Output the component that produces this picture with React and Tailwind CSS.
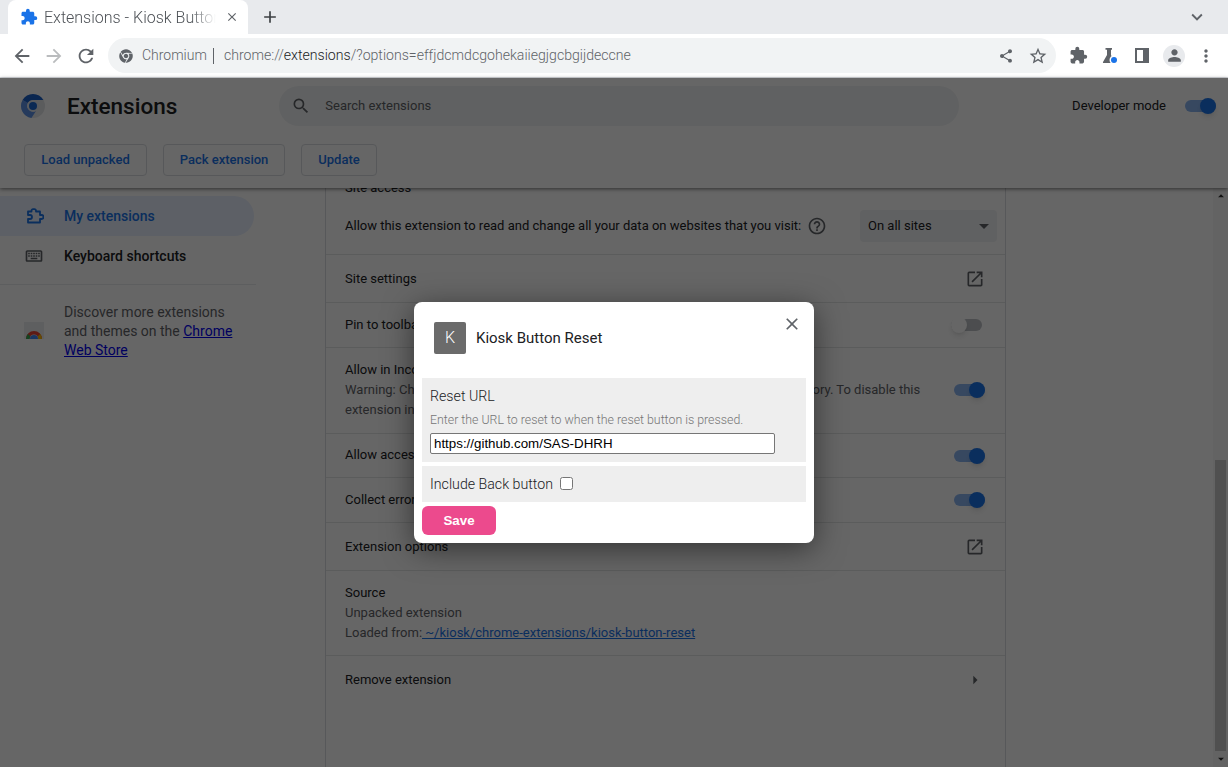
import {
  MdExtension, MdClose, MdAdd, MdExpandMore, MdArrowBack, MdArrowForward, MdRefresh, MdShare,
  MdStarBorder, MdPerson, MdMoreVert, MdSearch, MdOutlineKeyboard,
  MdHelpOutline, MdArrowDropDown, MdOpenInNew, MdArrowRight, MdArrowDropUp,
} from 'react-icons/md';
import { FaChrome } from 'react-icons/fa';

const ROBOTO = 'font-[Roboto,sans-serif]';

const HEADER_BUTTONS = [
  { label: 'Load unpacked', width: 'w-[123px]' },
  { label: 'Pack extension', width: 'w-[122px]' },
  { label: 'Update', width: 'w-[76px]' },
];

function Toggle({ on = true }) {
  return (
    <div className={`relative h-[12px] w-[31px] shrink-0 rounded-full ${on ? 'bg-[#8ab4f0]' : 'mr-[3px] bg-[#bdc1c6]'}`}>
      <div className={`absolute top-[-2px] h-[16px] w-[16px] rounded-full shadow-md ${on ? 'right-0 bg-[#1a73e8]' : 'left-0 bg-white'}`} />
    </div>
  );
}

function Row({ h, pr = 'pr-[20px]', className = '', children }) {
  return (
    <div className={`flex items-center justify-between border-b border-[#e4e5e7] pl-[19px] ${pr} ${h} ${className}`}>
      {children}
    </div>
  );
}

function ChromeBar() {
  return (
    <div className="shrink-0">
      {/* Tab strip */}
      <div className="flex h-[34px] items-end bg-[#e8eaed] pl-[8px]">
        <div className="flex h-[34px] w-[240px] items-center rounded-t-lg bg-white pl-[12px]">
          <MdExtension className="h-[18px] w-[18px] shrink-0 text-[#1a73e8]" />
          <span className="ml-[6px] mt-[2px] w-[172px] overflow-hidden whitespace-nowrap text-[16px] font-light text-[#4d5156] [mask-image:linear-gradient(to_right,black_85%,transparent)]">Extensions - Kiosk Button Reset</span>
          <MdClose className="ml-[9px] h-[14px] w-[14px] shrink-0 text-[#5f6368]" />
        </div>
        <MdAdd className="mb-[7px] ml-[12px] h-[20px] w-[20px] text-[#3c4043]" />
        <MdExpandMore className="mb-[6px] ml-auto mr-[20px] h-[22px] w-[22px] text-[#5f6368]" />
      </div>
      {/* Toolbar */}
      <div className="flex h-[44px] items-center border-b border-[#dadce0] bg-white">
        <MdArrowBack className="ml-[11px] h-[22px] w-[22px] text-[#5f6368]" />
        <MdArrowForward className="ml-[10px] h-[22px] w-[22px] text-[#babcbe]" />
        <MdRefresh className="ml-[10px] h-[22px] w-[22px] text-[#5f6368]" />
        <div className="ml-[11px] flex h-[35px] w-[948px] items-center rounded-full bg-[#f1f3f4] pl-[11px] pr-[8px] text-[14px] font-light">
          <FaChrome className="h-[14px] w-[14px] text-[#5f6368]" />
          <span className="ml-[9px] text-[#5f6368]">Chromium</span>
          <span className="ml-[6px] h-[16px] w-px bg-[#5f6368]" />
          <span className="ml-[10px] text-[14.1px] text-[#5f6368]">chrome://<span className="text-[#202124]">extensions</span>/?options=effjdcmdcgohekaiiegjgcbgijdeccne</span>
          <MdShare className="ml-auto h-[16px] w-[16px] text-[#5f6368]" />
          <MdStarBorder className="ml-[14px] h-[20px] w-[20px] text-[#5f6368]" />
        </div>
        <MdExtension className="ml-[13px] h-[19px] w-[19px] text-[#5f6368]" />
        <div className="relative ml-[12px] h-[20px] w-[20px]">
          <svg className="h-[20px] w-[20px]" viewBox="0 0 20 20">
            <path fill="#5f6368" d="M5.500 2H12V3.800H11V9L14 15.500V17H3.500C3 17 2.800 16.500 3 16L7 9V3.800H5.500Z" />
          </svg>
          <span className="absolute bottom-[3px] right-[3px] h-[6px] w-[6px] rounded-full bg-[#1a73e8] ring-[1.5px] ring-white" />
        </div>
        <svg className="ml-[15px] h-[15px] w-[14px]" viewBox="0 0 14 15">
          <path fill="#5f6368" d="M0 0h14v15H0zM2 2v11h6V2z" fillRule="evenodd" />
        </svg>
        <div className="ml-[14px] flex h-[22px] w-[22px] items-center justify-center rounded-full bg-[#e8eaed]">
          <MdPerson className="h-[19px] w-[19px] text-[#5f6368]" />
        </div>
        <MdMoreVert className="ml-[11px] h-[20px] w-[20px] text-[#5f6368]" />
      </div>
    </div>
  );
}

function PageHeader() {
  return (
    <div className="relative z-10 h-[110px] shrink-0 bg-white shadow-[0_1px_4px_rgba(0,0,0,0.55)]">
      <div className="flex h-[56px] items-center pl-[21px]">
        <svg className="h-[24px] w-[24px]" viewBox="0 0 24 24">
          <circle cx="12" cy="12" r="12" fill="#e3e5e9" />
          <path fill="#5c92e6" d="M1.610 6A12 12 0 0 0 10.400 23.900L15 17A6 6 0 0 1 6.800 9Z" />
          <path fill="#1a5fc8" d="M1.610 6A12 12 0 0 1 22.390 6H12A6 6 0 0 0 6.800 9Z" />
          <circle cx="12" cy="12" r="5.800" fill="#dfe3ea" />
          <circle cx="12" cy="12" r="4" fill="#1a67d2" />
        </svg>
        <h1 className="ml-[22px] mt-[2px] text-[22.5px] font-medium text-[#202124]">Extensions</h1>
        <div className="ml-[102px] flex h-[40px] w-[680px] items-center rounded-full bg-[#f1f3f4] pl-[12px] text-[13px] text-[#5f6368]">
          <MdSearch className="h-[20px] w-[20px] text-[#5f6368]" />
          <span className="ml-[14px]">Search extensions</span>
        </div>
        <span className="ml-auto text-[13px] text-[#202124]">Developer mode</span>
        <div className="ml-[19px] mr-[12px]"><Toggle /></div>
      </div>
      <div className="mt-[10px] flex gap-4 pl-[24px]">
        {HEADER_BUTTONS.map((b) => (
          <button key={b.label} className={`h-[32px] rounded border border-[#dadce0] text-[13px] font-medium text-[#1a73e8] ${b.width}`}>
            {b.label}
          </button>
        ))}
      </div>
    </div>
  );
}

function Sidebar() {
  return (
    <div className="w-[256px] shrink-0 pt-[8px] text-[14px]">
      <div className="flex h-[40px] w-[254px] items-center rounded-r-full bg-[#e8f0fe] pl-[24px] font-medium text-[#1a73e8]">
        <svg className="h-[20px] w-[20px]" viewBox="0 0 20 20" fill="none" stroke="currentColor" strokeWidth="1.8" strokeLinejoin="round">
          <path d="M4 5.500H7.500V4.700A1.500 1.500 0 0 1 9 3.200H10.500A1.500 1.500 0 0 1 12 4.700V5.500H16V9H17.500A1.200 1.200 0 0 1 17.500 13H16V16.500H4V13H6A1 1 0 0 0 6 9H4Z" />
        </svg>
        <span className="ml-[20px]">My extensions</span>
      </div>
      <div className="flex h-[40px] items-center pl-[24px] font-medium text-[#202124]">
        <MdOutlineKeyboard className="h-[20px] w-[20px] text-[#5f6368]" />
        <span className="ml-[20px]">Keyboard shortcuts</span>
      </div>
      <div className="mt-[8px] border-t border-[#e8eaed]" />
      <div className="mt-[18px] flex items-center pl-[24px]">
        <svg className="h-[20px] w-[20px]" viewBox="0 0 20 20">
          <rect x="0" y="0" width="20" height="17" fill="#eceef0" />
          <path fill="#ea4335" d="M2 17A8 8 0 0 1 18 17H14.500A4.500 4.500 0 0 0 5.500 17z" />
          <path fill="#34a853" d="M2 17A8 8 0 0 1 3.800 12L6.500 14.500A4.500 4.500 0 0 0 5.500 17z" />
          <path fill="#fbbc04" d="M18 17A8 8 0 0 0 16.200 12L13.500 14.500A4.500 4.500 0 0 1 14.500 17z" />
          <path fill="#4285f4" d="M6 17A4 4 0 0 1 14 17z" />
        </svg>
        <p className="ml-[20px] w-[180px] text-[14px] leading-[19px] text-[#5f6368]">
          Discover more extensions and themes on the <span className="text-[#0000ee] underline">Chrome Web Store</span>
        </p>
      </div>
    </div>
  );
}

function Card() {
  return (
    <div className="ml-[69px] w-[681px] shrink-0 overflow-hidden border-x border-[#dadce0] bg-white text-[13px] text-[#202124]">
      <div className="-mt-[10px]">
        <Row h="h-[77px]" pr="pr-[8px]">
          <div className="h-full w-full">
            <div className="leading-[20px]">Site access</div>
            <div className="mt-[12px] flex items-center">
              <span>Allow this extension to read and change all your data on websites that you visit:</span>
              <MdHelpOutline className="ml-[6px] h-[20px] w-[20px] text-[#5f6368]" />
              <div className="ml-auto flex h-[32px] w-[137px] items-center justify-between rounded bg-[#f1f3f4] pl-[8px] pr-[1px] text-[#202124]">
                <span>On all sites</span>
                <MdArrowDropDown className="h-[24px] w-[24px] text-[#5f6368]" />
              </div>
            </div>
          </div>
        </Row>
        <Row h="h-[48px]">
          <span>Site settings</span>
          <MdOpenInNew className="h-[20px] w-[20px] text-[#5f6368]" />
        </Row>
        <Row h="h-[45px]">
          <span>Pin to toolbar</span>
          <Toggle on={false} />
        </Row>
        <Row h="h-[86px]" className="pb-[2px]">
          <div className="w-[590px] leading-[20px]">
            <div>Allow in Incognito</div>
            <div className="text-[#5f6368]">Warning: Chromium cannot prevent extensions from recording your browsing history. To disable this extension in Incognito mode, unselect this option.</div>
          </div>
          <Toggle />
        </Row>
        <Row h="h-[44px]">
          <span className="mb-[2px]">Allow access to file URLs</span>
          <Toggle />
        </Row>
        <Row h="h-[45px]">
          <span>Collect errors</span>
          <Toggle />
        </Row>
        <Row h="h-[48px]">
          <span>Extension options</span>
          <MdOpenInNew className="h-[20px] w-[20px] text-[#5f6368]" />
        </Row>
        <Row h="h-[85px]">
          <div className="leading-[20px]">
            <div>Source</div>
            <div className="text-[#5f6368]">Unpacked extension</div>
            <div className="text-[#5f6368]">Loaded from:<span className="text-[#1a73e8] underline"> ~/kiosk/chrome-extensions/kiosk-button-reset</span></div>
          </div>
        </Row>
        <div className="flex h-[48px] items-center justify-between pl-[19px] pr-[20px]">
          <span>Remove extension</span>
          <MdArrowRight className="h-[20px] w-[20px] text-[#5f6368]" />
        </div>
      </div>
    </div>
  );
}

function Dialog() {
  return (
    <div className="relative h-[241px] w-[400px] rounded-lg bg-white px-2 shadow-[0_6px_30px_rgba(0,0,0,0.5)]">
      <MdClose className="absolute right-[12px] top-[12px] h-[20px] w-[20px] text-[#5f6368]" />
      <div className="flex h-[72px] items-center pl-3">
        <div className="flex h-[32px] w-[32px] items-center justify-center rounded-[2px] bg-[#6b6b6b] text-[16px] font-light text-white">K</div>
        <span className="ml-[10px] text-[15px] text-[#202124]">Kiosk Button Reset</span>
      </div>
      <div className="mt-[4px] h-[84px] bg-[#eee] px-2 pt-[8px]">
        <div className="text-[14.2px] font-light leading-[20px] text-[#202124]">Reset URL</div>
        <div className="mt-[6px] text-[12.35px] font-light leading-[16px] text-[#757575]">Enter the URL to reset to when the reset button is pressed.</div>
        <input
          readOnly
          value="https://github.com/SAS-DHRH"
          className="mt-[5px] block h-[21px] w-[345px] rounded-[2px] border border-[#767676] bg-white px-[3px] font-['Liberation_Sans',sans-serif] text-[13.33px] text-black"
        />
      </div>
      <div className="mt-[4px] flex h-[36px] items-center bg-[#eee] px-2">
        <span className="pt-[2px] text-[14.2px] font-light text-[#202124]">Include Back button</span>
        <input type="checkbox" readOnly className="mb-[1px] ml-[7px] h-[13px] w-[13px]" />
      </div>
      <button className="mt-[4px] h-[29px] w-[74px] rounded-md bg-[#ec4a8d] font-['Liberation_Sans',sans-serif] text-[13.33px] font-bold text-white">
        Save
      </button>
    </div>
  );
}

export default function App() {
  return (
    <div className={`flex h-[767px] w-[1228px] flex-col overflow-hidden bg-white ${ROBOTO}`}>
      <ChromeBar />
      <div className="relative flex min-h-0 flex-1 flex-col">
        <PageHeader />
        <div className="flex min-h-0 flex-1">
          <Sidebar />
          <Card />
          {/* Scrollbar */}
          <div className="ml-auto flex w-[15px] flex-col items-center justify-between bg-[#f8f8f8]">
            <MdArrowDropUp className="mt-[1px] h-[14px] w-[14px] text-[#303030]" />
            <div className="mt-auto h-[291px] w-[11px] bg-[#c8c8c8]" />
            <MdArrowDropUp className="mb-[1px] mt-[1px] h-[14px] w-[14px] rotate-180 text-[#303030]" />
          </div>
        </div>
        {/* Modal scrim */}
        <div className="absolute inset-0 z-20 flex items-center justify-center bg-black/60">
          <Dialog />
        </div>
      </div>
    </div>
  );
}
